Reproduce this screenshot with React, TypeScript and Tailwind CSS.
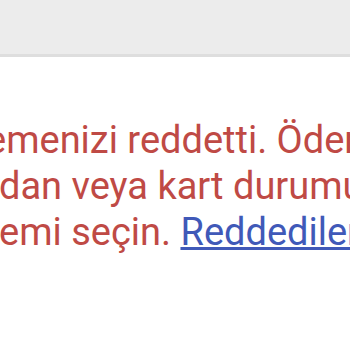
import React from "react";

export default function App() {
  return (
    <div className="w-[350px] h-[350px] bg-white overflow-hidden" style={{ fontFamily: "Roboto, 'Noto Sans', sans-serif" }}>
      <div className="h-[57px] bg-[#ececec] border-b-[3px] border-[#dedede]" />
      <div className="pt-[60px] text-[38px] leading-[46px] text-[#bf4a45] whitespace-nowrap">
        <div className="-ml-[14px]">emenizi reddetti. Ödeme</div>
        <div className="-ml-[1px]">dan veya kart durumu</div>
        <div className="-ml-[1px]">
          emi seçin. <a className="text-[#4059b8] underline">Reddedilen</a>
        </div>
      </div>
    </div>
  );
}
